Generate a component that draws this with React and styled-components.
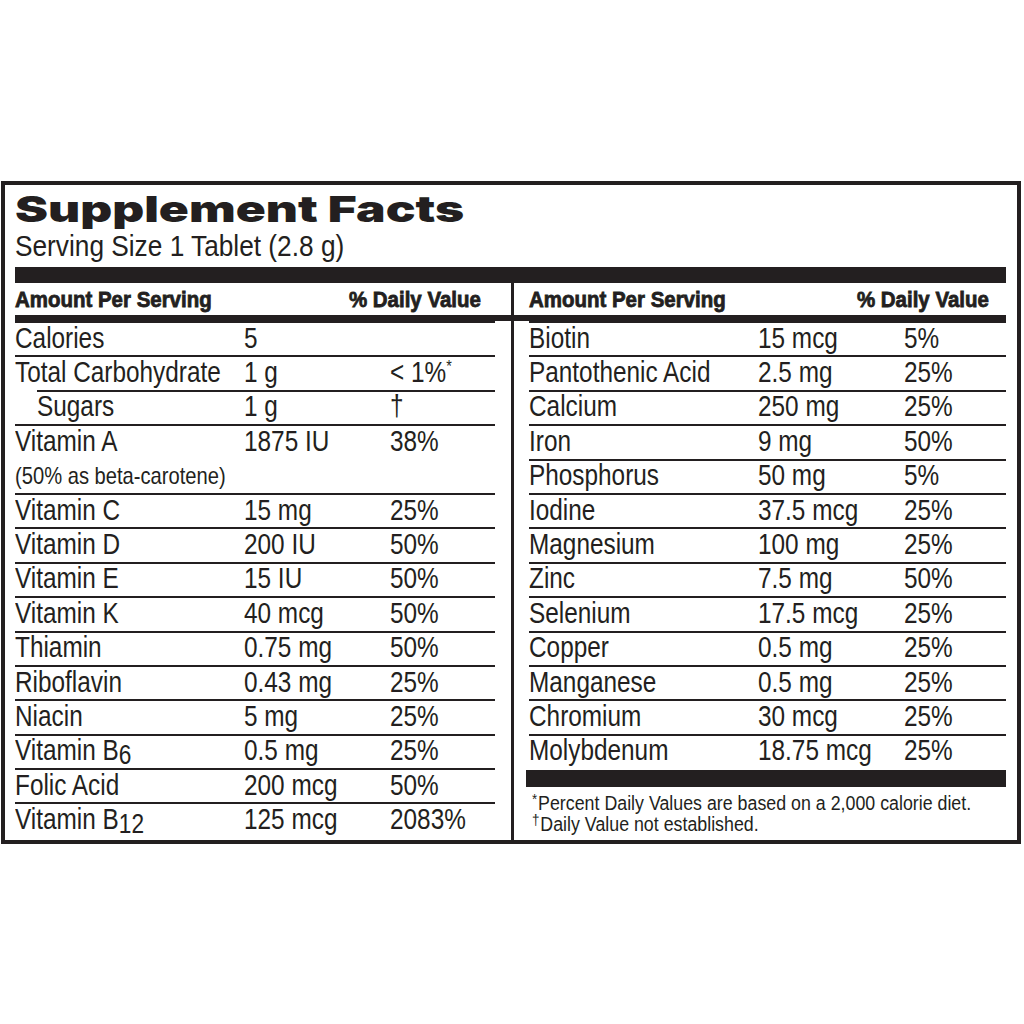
import React from 'react';
import styled, { createGlobalStyle } from 'styled-components';

const ink = '#231f20';

const leftRows = [
  { name: 'Calories', amount: '5', dv: '' },
  { name: 'Total Carbohydrate', amount: '1 g', dv: 'lt1' },
  { name: 'Sugars', amount: '1 g', dv: '†', indent: 22 },
  { name: 'Vitamin A', amount: '1875 IU', dv: '38%' },
  { note: '(50% as beta-carotene)' },
  { name: 'Vitamin C', amount: '15 mg', dv: '25%' },
  { name: 'Vitamin D', amount: '200 IU', dv: '50%' },
  { name: 'Vitamin E', amount: '15 IU', dv: '50%' },
  { name: 'Vitamin K', amount: '40 mcg', dv: '50%' },
  { name: 'Thiamin', amount: '0.75 mg', dv: '50%' },
  { name: 'Riboflavin', amount: '0.43 mg', dv: '25%' },
  { name: 'Niacin', amount: '5 mg', dv: '25%' },
  { name: 'Vitamin B', sub: '6', amount: '0.5 mg', dv: '25%' },
  { name: 'Folic Acid', amount: '200 mcg', dv: '50%' },
  { name: 'Vitamin B', sub: '12', amount: '125 mcg', dv: '2083%' },
];

const rightRows = [
  { name: 'Biotin', amount: '15 mcg', dv: '5%' },
  { name: 'Pantothenic Acid', amount: '2.5 mg', dv: '25%' },
  { name: 'Calcium', amount: '250 mg', dv: '25%' },
  { name: 'Iron', amount: '9 mg', dv: '50%' },
  { name: 'Phosphorus', amount: '50 mg', dv: '5%' },
  { name: 'Iodine', amount: '37.5 mcg', dv: '25%' },
  { name: 'Magnesium', amount: '100 mg', dv: '25%' },
  { name: 'Zinc', amount: '7.5 mg', dv: '50%' },
  { name: 'Selenium', amount: '17.5 mcg', dv: '25%' },
  { name: 'Copper', amount: '0.5 mg', dv: '25%' },
  { name: 'Manganese', amount: '0.5 mg', dv: '25%' },
  { name: 'Chromium', amount: '30 mcg', dv: '25%' },
  { name: 'Molybdenum', amount: '18.75 mcg', dv: '25%' },
];

function Nutrient({ row }) {
  if (row.note) {
    return (
      <NoteRow>
        <Cell>{row.note}</Cell>
      </NoteRow>
    );
  }
  const indent = row.indent || 0;
  return (
    <Row $indent={indent}>
      <Cell>
        {row.name}
        {row.sub && <Sub>{row.sub}</Sub>}
      </Cell>
      <Cell>{row.amount}</Cell>
      <Cell>
        {row.dv === 'lt1' ? (
          <>
            &lt; 1%<Star>*</Star>
          </>
        ) : (
          row.dv
        )}
      </Cell>
    </Row>
  );
}

function Head({ side }) {
  return (
    <>
      <HeadRow $side={side}>
        <HeadText $align="left">Amount Per Serving</HeadText>
        <HeadText $align="right">% Daily Value</HeadText>
      </HeadRow>
      <HeadBar />
    </>
  );
}

export default function App() {
  return (
    <Page>
      <GlobalStyle />
      <Label>
        <Title>Supplement Facts</Title>
        <Serving>Serving Size 1 Tablet (2.8 g)</Serving>
        <ThickBar />
        <Columns>
          <Column $side="left">
            <Head side="left" />
            <RowList $side="left">
              {leftRows.map((r, i) => (
                <Nutrient key={i} row={r} />
              ))}
            </RowList>
          </Column>
          <Column $side="right">
            <Head side="right" />
            <RowList $side="right">
              {rightRows.map((r, i) => (
                <Nutrient key={i} row={r} />
              ))}
              <FootBar />
              <Footnotes>
                <div>
                  <FootMark>*</FootMark>Percent Daily Values are based on a 2,000 calorie diet.
                </div>
                <div>
                  <FootMark>†</FootMark>Daily Value not established.
                </div>
              </Footnotes>
            </RowList>
          </Column>
        </Columns>
      </Label>
    </Page>
  );
}

// Styled Components
const GlobalStyle = createGlobalStyle`
  body {
    margin: 0;
    background: #ffffff;
    color: ${ink};
    font-family: "Liberation Sans", Arial, sans-serif;
  }
`;

const Page = styled.div`
  padding: 181px 3px 0 1px;
  height: 1024px;
  box-sizing: border-box;
`;

const Label = styled.div`
  width: 1020px;
  height: 663px;
  box-sizing: border-box;
  border: 4px solid ${ink};
  padding: 0 11px 0 10px;
  display: flex;
  flex-direction: column;
`;

const Title = styled.div`
  flex-shrink: 0;
  align-self: flex-start;
  width: max-content;
  height: 36px;
  font-family: Inter, "Liberation Sans", sans-serif;
  font-weight: 900;
  font-size: 36px;
  line-height: 36px;
  margin-top: 6px;
  transform: scaleX(1.377);
  transform-origin: left center;
  white-space: nowrap;
`;

const Serving = styled.div`
  flex-shrink: 0;
  height: 29px;
  font-size: 29px;
  line-height: 29px;
  margin-top: 5px;
  transform: scaleX(0.905);
  transform-origin: left center;
  white-space: nowrap;
`;

const ThickBar = styled.div`
  flex-shrink: 0;
  height: 16px;
  margin-top: 6px;
  background: ${ink};
`;

const Columns = styled.div`
  flex: 1;
  display: grid;
  grid-template-columns: 499px minmax(0, 1fr);
`;

const Column = styled.div`
  display: flex;
  flex-direction: column;
  min-width: 0;
  border-right: ${(p) => (p.$side === 'left' ? `3px solid ${ink}` : 'none')};
`;

const HeadRow = styled.div`
  flex-shrink: 0;
  height: 32px;
  box-sizing: border-box;
  display: flex;
  justify-content: space-between;
  align-items: flex-end;
  padding: ${(p) => (p.$side === 'left' ? '0 30px 4px 0' : '0 17px 4px 15px')};
`;

const HeadText = styled.span`
  font-weight: 700;
  font-size: 22px;
  line-height: 22px;
  -webkit-text-stroke: 0.8px ${ink};
  transform: scaleX(0.93);
  transform-origin: ${(p) => p.$align} center;
  white-space: nowrap;
`;

const HeadBar = styled.div`
  flex-shrink: 0;
  height: 6px;
  background: ${ink};
`;

const RowList = styled.div`
  display: flex;
  flex-direction: column;
  padding: ${(p) => (p.$side === 'left' ? '0 16px 0 0' : '0 0 0 15px')};
`;

const Row = styled.div`
  flex-shrink: 0;
  display: grid;
  grid-template-columns: ${(p) => 229 - p.$indent}px 146px 1fr;
  margin-left: ${(p) => p.$indent}px;
  height: 34.4px;
  box-sizing: border-box;
  border-top: 2px solid ${ink};
  padding-bottom: 2px;
  align-items: center;
  font-size: 29px;
  line-height: 29px;
`;

const Cell = styled.span`
  display: block;
  white-space: nowrap;
  transform: scaleX(0.84);
  transform-origin: left center;
`;

const NoteRow = styled.div`
  flex-shrink: 0;
  height: 34.4px;
  box-sizing: border-box;
  display: flex;
  align-items: center;
  font-size: 24px;
  line-height: 24px;
`;

const Sub = styled.span`
  font-size: 27px;
  line-height: 0;
  vertical-align: -4px;
`;

const Star = styled.span`
  font-size: 17px;
  line-height: 0;
  vertical-align: 10px;
`;

const FootBar = styled.div`
  flex-shrink: 0;
  height: 17px;
  margin: 2px 0 0 -3px;
  background: ${ink};
`;

const Footnotes = styled.div`
  flex-shrink: 0;
  margin: 6px 0 0 3px;
  font-size: 20px;
  line-height: 21px;
  white-space: nowrap;
  transform: scaleX(0.89);
  transform-origin: left center;
`;

const FootMark = styled.span`
  font-size: 15px;
  line-height: 0;
  vertical-align: 6px;
  margin-right: 1px;
`;
